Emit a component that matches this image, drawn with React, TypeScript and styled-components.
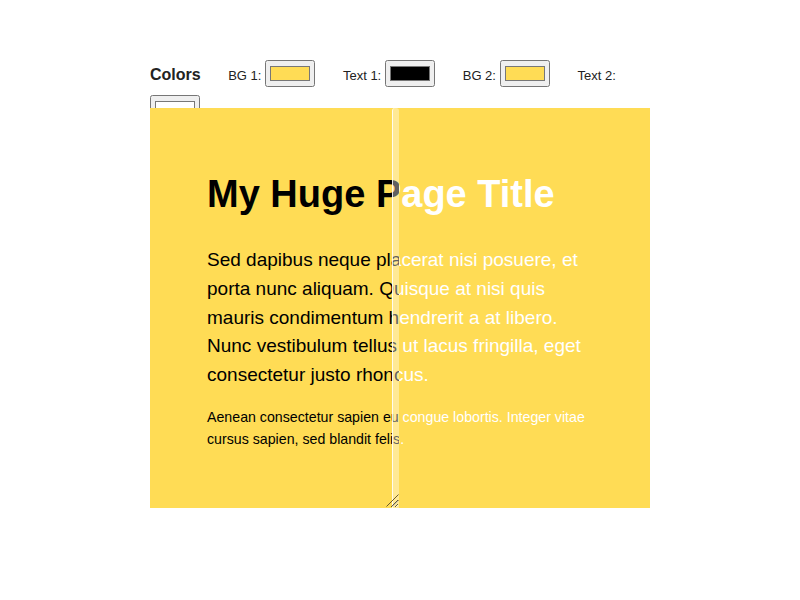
import React from "react";
import styled, { createGlobalStyle } from "styled-components";

const YELLOW = "#ffdc55";

const fields = [
  { label: "BG 1:", value: YELLOW },
  { label: "Text 1:", value: "#000000" },
  { label: "BG 2:", value: YELLOW },
  { label: "Text 2:", value: "#ffffff" },
];

const PageContent = ({ bg, fg }: { bg: string; fg: string }) => (
  <_Content bg={bg} fg={fg}>
    <_Title>My Huge Page Title</_Title>
    <_Lead>
      Sed dapibus neque placerat nisi posuere, et porta nunc aliquam. Quisque at
      nisi quis mauris condimentum hendrerit a at libero. Nunc vestibulum tellus
      ut lacus fringilla, eget consectetur justo rhoncus.
    </_Lead>
    <_Small>
      Aenean consectetur sapien eu congue lobortis. Integer vitae cursus sapien,
      sed blandit felis.
    </_Small>
  </_Content>
);

const App = () => {
  return (
    <>
      <GlobalStyle />
      <_Wrapper>
        <_Toolbar>
          <_ToolbarTitle>Colors</_ToolbarTitle>
          {fields.map((f) => (
            <React.Fragment key={f.label}>
              <_Label>{f.label}</_Label>
              <_ColorInput type="color" defaultValue={f.value} />
            </React.Fragment>
          ))}
        </_Toolbar>
        <_Stage>
          <PageContent bg={YELLOW} fg="#ffffff" />
          <_Overlay>
            <PageContent bg={YELLOW} fg="#000000" />
            <_Grip width="13" height="13" viewBox="0 0 13 13">
              <line x1="0.5" y1="12.5" x2="12.5" y2="0.5" stroke="#6b5a2a" strokeWidth="1" />
              <line x1="6.5" y1="12.5" x2="12.5" y2="6.5" stroke="#6b5a2a" strokeWidth="1" />
            </_Grip>
          </_Overlay>
        </_Stage>
      </_Wrapper>
    </>
  );
};

export default App;

const GlobalStyle = createGlobalStyle`
  body {
    margin: 0;
    background: #ffffff;
    font-family: "Liberation Sans", Arial, sans-serif;
  }
`;

const _Wrapper = styled.div`
  width: 500px;
  margin: 60px auto 0;
`;

const _Toolbar = styled.div`
  display: flex;
  flex-wrap: wrap;
  align-items: center;
  row-gap: 8px;
  height: 48px;
  color: #222222;
`;

const _ToolbarTitle = styled.span`
  margin-top: 3px;
  font-size: 16px;
  font-weight: 700;
`;

const _Label = styled.span`
  margin: 4px 4px 0 27.5px;
  font-size: 13px;
`;

const _ColorInput = styled.input`
  width: 50px;
  height: 27px;
  margin: 0;
`;

const _Stage = styled.div`
  position: relative;
  width: 500px;
  height: 400px;
  overflow: hidden;
`;

const _Content = styled.div<{ bg: string; fg: string }>`
  box-sizing: border-box;
  width: 500px;
  height: 400px;
  padding: 64px 57px 0;
  background: ${({ bg }) => bg};
  color: ${({ fg }) => fg};
`;

const _Title = styled.h1`
  margin: 0 0 30px;
  font-size: 38px;
  line-height: 44px;
  font-weight: 700;
`;

const _Lead = styled.p`
  margin: 0 0 17.5px;
  font-size: 19px;
  line-height: 28.8px;
`;

const _Small = styled.p`
  margin: 0;
  font-size: 14.2px;
  line-height: 21.3px;
`;

const _Overlay = styled.div`
  position: absolute;
  top: 0;
  left: 0;
  width: 249px;
  height: 100%;
  overflow: hidden;
  resize: horizontal;

  &::after {
    content: "";
    position: absolute;
    top: 0;
    right: 0;
    bottom: 0;
    width: 6px;
    border-left: 1px solid rgba(255, 255, 255, 0.85);
    background: rgba(255, 255, 255, 0.38);
    border-radius: 3px 3px 0 0;
  }
`;

const _Grip = styled.svg`
  position: absolute;
  right: 0;
  bottom: 1px;
  z-index: 1;
`;
